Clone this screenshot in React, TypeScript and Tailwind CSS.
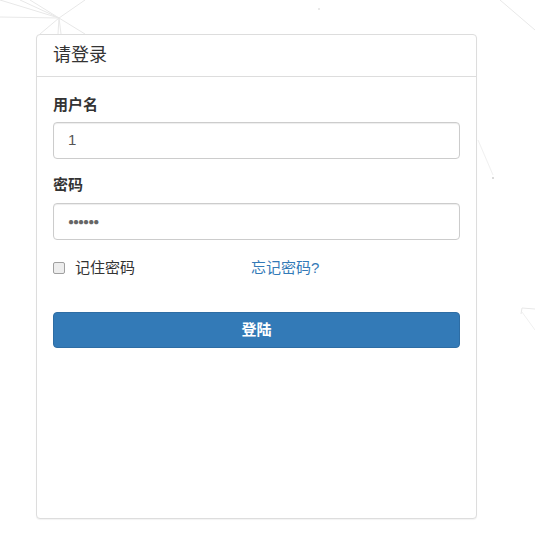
import React from "react";

const font = {
  fontFamily: '"Liberation Sans", Arial, "Noto Sans CJK SC", sans-serif',
};

export default function App() {
  return (
    <div className="relative w-[535px] h-[538px] bg-white overflow-hidden text-[#333]" style={font}>
      <svg className="absolute inset-0 pointer-events-none" width="535" height="538">
        <g stroke="#e8e8e8" strokeWidth="1" fill="none">
          <line x1="0" y1="0" x2="59" y2="18" />
          <line x1="20" y1="0" x2="59" y2="18" />
          <line x1="30" y1="0" x2="59" y2="18" />
          <line x1="85" y1="0" x2="59" y2="18" />
          <line x1="0" y1="17" x2="59" y2="18" />
          <line x1="59" y1="18" x2="58" y2="34" />
          <line x1="59" y1="18" x2="61" y2="34" />
          <line x1="59" y1="18" x2="85" y2="34" />
          <line x1="59" y1="18" x2="40" y2="34" />
          <line x1="500" y1="0" x2="535" y2="30" />
          <line x1="478" y1="140" x2="493" y2="175" stroke="#f0f0f0" />
          <line x1="522" y1="312" x2="535" y2="330" stroke="#f0f0f0" />
          <line x1="522" y1="308" x2="535" y2="309" />
          <line x1="522" y1="308" x2="521" y2="314" />
        </g>
        <circle cx="493" cy="178" r="0.8" fill="#aaa" />
        <circle cx="319" cy="9" r="0.8" fill="#ccc" />
      </svg>

      <div className="relative ml-[36px] pt-[34px]">
        <div className="w-[441px] h-[485px] border border-[#ddd] rounded-[4px] bg-white shadow-[0_1px_1px_rgba(0,0,0,0.05)]">
          <div className="h-[42px] flex items-center px-[16px] border-b border-[#ddd] text-[18px]">
            请登录
          </div>
          <div className="px-[16px] pt-[18px]">
            <div className="h-[20px] leading-[20px] text-[15px] font-bold mb-[7px]">用户名</div>
            <div className="h-[37px] w-[407px] border border-[#ccc] rounded-[4px] flex items-center px-[14px] text-[15px] text-[#555] shadow-[inset_0_1px_1px_rgba(0,0,0,0.075)]">
              1
            </div>
            <div className="h-[20px] leading-[20px] text-[15px] font-bold mt-[16px] mb-[8px]">密码</div>
            <div className="h-[37px] w-[407px] border border-[#ccc] rounded-[4px] flex items-center px-[14px] text-[15px] text-[#666] shadow-[inset_0_1px_1px_rgba(0,0,0,0.075)]">
              <span className="tracking-[-1px] text-[10px]">●●●●●●</span>
            </div>
            <div className="flex items-center h-[20px] mt-[18px] text-[15px]">
              <div className="w-[198px] flex items-center">
                <span className="w-[12px] h-[12px] border border-[#a0a0a0] rounded-[2px] bg-[#ededed] mr-[10px]" />
                <span>记住密码</span>
              </div>
              <span className="text-[#337ab7]">忘记密码?</span>
            </div>
            <div className="mt-[34px] h-[36px] w-[407px] rounded-[4px] bg-[#337ab7] border border-[#2e6da4] text-white text-[15px] font-bold flex items-center justify-center">
              登陆
            </div>
          </div>
        </div>
      </div>
    </div>
  );
}
